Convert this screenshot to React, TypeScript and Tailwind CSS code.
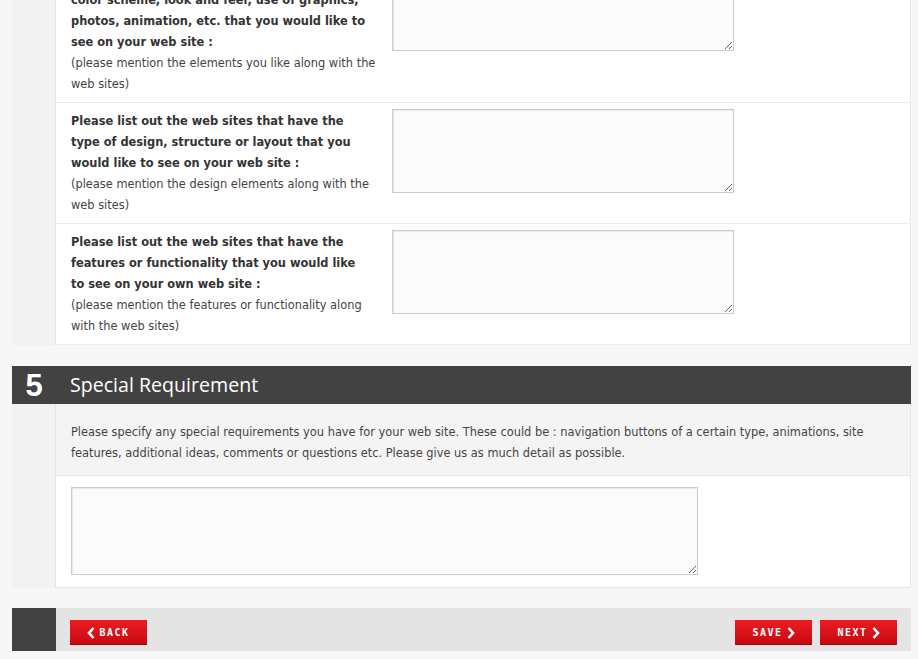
import React from "react";

const body = { fontFamily: '"DejaVu Sans", Verdana, sans-serif' };

const rows = [
  {
    label: [
      "Please list out the web sites that have the",
      "color scheme, look and feel, use of graphics,",
      "photos, animation, etc. that you would like to",
      "see on your web site :",
    ],
    note: ["(please mention the elements you like along with the", "web sites)"],
  },
  {
    label: [
      "Please list out the web sites that have the",
      "type of design, structure or layout that you",
      "would like to see on your web site :",
    ],
    note: ["(please mention the design elements along with the", "web sites)"],
  },
  {
    label: [
      "Please list out the web sites that have the",
      "features or functionality that you would like",
      "to see on your own web site :",
    ],
    note: ["(please mention the features or functionality along", "with the web sites)"],
  },
];

function Chevron({ dir }: { dir: "left" | "right" }) {
  return (
    <svg width="8" height="12" viewBox="0 0 8 12" className="shrink-0">
      <polyline
        points={dir === "left" ? "6.5,1 2,6 6.5,11" : "1.5,1 6,6 1.5,11"}
        fill="none"
        stroke="#fff"
        strokeWidth="2.6"
      />
    </svg>
  );
}

function RedButton({ label, dir }: { label: string; dir: "left" | "right" }) {
  return (
    <button className="flex h-[25px] w-[77px] items-center justify-center gap-[4px] bg-gradient-to-b from-[#ee1b22] to-[#c20a10] shadow-[inset_0_-1px_0_#a0060b]">
      {dir === "left" && <Chevron dir="left" />}
      <span
        className="text-[10px] font-bold uppercase leading-none tracking-[1.5px] text-white"
        style={{ fontFamily: '"DejaVu Sans Mono", monospace' }}
      >
        {label}
      </span>
      {dir === "right" && <Chevron dir="right" />}
    </button>
  );
}

export default function App() {
  return (
    <div className="h-[659px] overflow-hidden bg-[#f7f7f7]" style={body}>
      <div className="ml-[12px] w-[899px] -mt-[39px]">
        {/* question rows */}
        <div className="flex">
          <div className="w-[44px] shrink-0 bg-[#f2f2f2] border-r border-[#e3e3e3]" />
          <div className="flex-1 bg-white border-r border-[#e8e8e8]">
            {rows.map((r, i) => (
              <div key={i} className="flex border-b border-[#ececec] pl-[15px] pt-[6px] pb-[7px]">
                <div className="w-[321px] shrink-0 whitespace-nowrap pt-[2px] text-[11.4px] leading-[21px]">
                  <p className="font-bold text-[#333]">
                    {r.label.map((l, j) => (
                      <React.Fragment key={j}>
                        {l}
                        <br />
                      </React.Fragment>
                    ))}
                  </p>
                  <p className="text-[#444]">
                    {r.note.map((l, j) => (
                      <React.Fragment key={j}>
                        {l}
                        {j < r.note.length - 1 && <br />}
                      </React.Fragment>
                    ))}
                  </p>
                </div>
                <textarea className="h-[84px] w-[342px] border border-[#cccccc] bg-[#fbfbfb] shadow-[inset_1px_1px_1px_#e8e8e8] outline-none" />
              </div>
            ))}
          </div>
        </div>

        {/* section header */}
        <div className="mt-[21px] flex h-[38px] items-center bg-[#424242]">
          <div className="flex w-[44px] justify-center pt-[1px]">
            <span
              className="text-[31px] font-bold leading-none text-white"
              style={{ fontFamily: '"Liberation Sans", Arial, sans-serif' }}
            >
              5
            </span>
          </div>
          <h2
            className="ml-[14px] text-[19.6px] leading-none text-white"
            style={{ fontFamily: '"Open Sans", sans-serif' }}
          >
            Special Requirement
          </h2>
        </div>

        {/* section body */}
        <div className="flex">
          <div className="w-[44px] shrink-0 bg-[#f2f2f2] border-r border-[#e3e3e3]" />
          <div className="flex-1 border-r border-[#e8e8e8] border-b border-b-[#e6e6e6]">
            <div className="whitespace-nowrap border-b border-[#e6e6e6] bg-[#f4f4f4] pl-[15px] pt-[18px] pb-[11px] text-[11.4px] leading-[21px] text-[#444]">
              Please specify any special requirements you have for your web site. These could be : navigation buttons of a certain type, animations, site
              <br />
              features, additional ideas, comments or questions etc. Please give us as much detail as possible.
            </div>
            <div className="bg-white pl-[15px] pt-[11px] pb-[12px]">
              <textarea className="block h-[88px] w-[627px] border border-[#cccccc] bg-[#fbfbfb] shadow-[inset_1px_1px_1px_#e8e8e8] outline-none" />
            </div>
          </div>
        </div>

        {/* footer nav */}
        <div className="mt-[20px] flex h-[43px]">
          <div className="w-[44px] shrink-0 bg-[#424242]" />
          <div className="flex flex-1 items-start justify-between bg-[#e4e4e4] pl-[14px] pr-[14px] pt-[12px]">
            <RedButton label="Back" dir="left" />
            <div className="flex gap-[8px]">
              <RedButton label="Save" dir="right" />
              <RedButton label="Next" dir="right" />
            </div>
          </div>
        </div>
      </div>
    </div>
  );
}
